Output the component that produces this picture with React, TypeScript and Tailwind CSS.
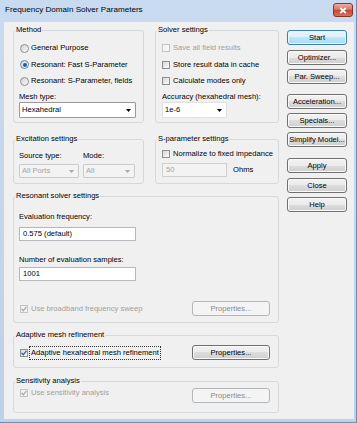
import React from "react";

const FONT = "font-['Liberation_Sans',Arial,sans-serif]";

function Arrow({ color = "#000" }: { color?: string }) {
  return (
    <svg width="5" height="3" viewBox="0 0 5 3" className="shrink-0">
      <path d="M0 0 H5 L2.5 3 Z" fill={color} />
    </svg>
  );
}

function Radio({ label, checked = false, h }: { label: string; checked?: boolean; h: string }) {
  return (
    <div className={`flex items-center ${h}`}>
      <span
        className={`ml-[1px] flex h-[9px] w-[9px] shrink-0 items-center justify-center rounded-full border ${
          checked ? "border-[#5a86b8]" : "border-[#8e8f8f]"
        } bg-[linear-gradient(135deg,#d2d2d2,#fbfbfb)]`}
      >
        {checked && <span className="h-[4px] w-[4px] rounded-full bg-[#1f5e9c]" />}
      </span>
      <span className="ml-[2px]">{label}</span>
    </div>
  );
}

function Check({ checked = false, disabled = false }: { checked?: boolean; disabled?: boolean }) {
  return (
    <span
      className={`flex h-[8px] w-[8px] shrink-0 items-center justify-center border ${
        disabled
          ? "border-[#c4c4c4] bg-[#f4f4f4]"
          : "border-[#8e8f8f] bg-[linear-gradient(135deg,#d6d6d6,#fbfbfb)]"
      }`}
    >
      {checked && (
        <svg width="6" height="6" viewBox="0 0 6 6">
          <path
            d="M0.6 3 L2.3 4.8 L5.4 0.8"
            fill="none"
            stroke={disabled ? "#a9a9a9" : "#3f55a5"}
            strokeWidth="1.3"
          />
        </svg>
      )}
    </span>
  );
}

function CheckRow({
  label,
  checked = false,
  disabled = false,
  h,
  ml = "ml-0",
}: {
  label: string;
  checked?: boolean;
  disabled?: boolean;
  h: string;
  ml?: string;
}) {
  return (
    <div className={`flex items-center ${h} ${ml}`}>
      <Check checked={checked} disabled={disabled} />
      <span className={`ml-[3px] ${disabled ? "text-[#a0a0a0]" : ""}`}>{label}</span>
    </div>
  );
}

function Combo({
  value,
  w,
  h,
  disabled = false,
  light = false,
}: {
  value: string;
  w: string;
  h: string;
  disabled?: boolean;
  light?: boolean;
}) {
  const box = disabled
    ? "border-[#cbcbcb] bg-[#f3f3f3] text-[#a3a3a3]"
    : light
    ? "border-[#e1e1e1] bg-white"
    : "border-[#9a9a9a] bg-white";
  return (
    <div className={`flex items-center justify-between rounded-[1px] border pl-[2px] pr-[4px] ${w} ${h} ${box}`}>
      <span>{value}</span>
      <Arrow color={disabled ? "#a8a8a8" : "#000"} />
    </div>
  );
}

function TextBox({ value, w, h, disabled = false }: { value: string; w: string; h: string; disabled?: boolean }) {
  return (
    <div
      className={`flex items-center border pl-[3px] ${w} ${h} ${
        disabled ? "border-[#d0d0d0] bg-[#f3f3f3] text-[#a3a3a3]" : "border-[#b5b7bd] bg-white"
      }`}
    >
      {value}
    </div>
  );
}

function Btn({
  label,
  mt = "mt-0",
  w = "w-[60px]",
  variant = "normal",
}: {
  label: string;
  mt?: string;
  w?: string;
  variant?: "normal" | "default" | "disabled";
}) {
  const style =
    variant === "default"
      ? "border-[#3c7fb1] bg-[linear-gradient(#eaf6fd,#d9f0fc_50%,#bee6fd_50%,#a7d9f5)] shadow-[inset_0_0_0_1px_#e6f5fd]"
      : variant === "disabled"
      ? "border-[#b3b7ba] bg-[#f4f4f4] text-[#8a8a8a]"
      : "border-[#707070] bg-[linear-gradient(#f2f2f2,#ebebeb_50%,#dddddd_50%,#cfcfcf)] shadow-[inset_0_0_0_1px_#fafafa]";
  return (
    <div className={`flex h-[15px] shrink-0 items-center justify-center rounded-[3px] border ${w} ${mt} ${style}`}>
      {label}
    </div>
  );
}

function Group({
  title,
  className,
  children,
}: {
  title: string;
  className: string;
  children: React.ReactNode;
}) {
  return (
    <fieldset className={`min-w-0 rounded-[3px] border border-[#d5d9dd] ${className}`}>
      <legend className="ml-[1px] h-[10px] px-[1px] leading-[10px]">{title}</legend>
      {children}
    </fieldset>
  );
}

export default function App() {
  return (
    <div
      className={`flex h-[423px] w-[357px] flex-col overflow-hidden border-b border-r border-[#4d9bc9] bg-[linear-gradient(#c9dbf0,#bcd1ea)] ${FONT} text-[7.6px] leading-none text-black`}
    >
      {/* title bar */}
      <div className="flex h-[22px] shrink-0 items-start justify-between pl-[5px] pr-[3px]">
        <span className="mt-[6px] text-[8.1px]">Frequency Domain Solver Parameters</span>
        <div className="mt-[3px] flex h-[14px] w-[20px] items-center justify-center rounded-[3px] border border-[#8b3326] bg-[linear-gradient(#eab0a4,#d66e5a_50%,#c5442e_50%,#d6735e)]">
          <svg width="8" height="7" viewBox="0 0 8 7">
            <path d="M1.2 1 L6.8 6 M6.8 1 L1.2 6" stroke="#ffffff" strokeWidth="1.7" />
          </svg>
        </div>
      </div>

      {/* client area */}
      <div className="mb-[3px] ml-[4px] mr-[2px] flex flex-1 bg-[#f0f0f0] pl-[9px] pr-[7px] pt-[3px]">
        {/* left column */}
        <div className="flex w-[266px] flex-col">
          <div className="flex gap-[11px]">
            <Group title="Method" className="h-[98px] w-[131px]">
              <div className="flex flex-col pl-[5px] pt-[5px]">
                <Radio label="General Purpose" h="h-[16px]" />
                <Radio label="Resonant: Fast S-Parameter" checked h="h-[17px]" />
                <Radio label="Resonant: S-Parameter, fields" h="h-[16px]" />
                <div className="flex h-[13px] items-center pt-[3px]">Mesh type:</div>
                <Combo value="Hexahedral" w="w-[117px]" h="h-[16px]" />
              </div>
            </Group>
            <Group title="Solver settings" className="h-[98px] w-[124px]">
              <div className="flex flex-col pl-[6px] pt-[5px]">
                <CheckRow label="Save all field results" disabled h="h-[16px]" />
                <CheckRow label="Store result data in cache" h="h-[17px]" />
                <CheckRow label="Calculate modes only" h="h-[16px]" />
                <div className="flex h-[13px] items-center pt-[3px]">Accuracy (hexahedral mesh):</div>
                <Combo value="1e-6" w="w-[65px]" h="h-[16px]" light />
              </div>
            </Group>
          </div>

          <div className="mt-[11px] flex gap-[11px]">
            <Group title="Excitation settings" className="h-[50px] w-[131px]">
              <div className="flex pl-[5px] pt-[6px]">
                <div className="flex flex-col">
                  <div className="flex h-[12px] items-center">Source type:</div>
                  <div className="mt-[2px]">
                    <Combo value="All Ports" w="w-[60px]" h="h-[14px]" disabled />
                  </div>
                </div>
                <div className="ml-[4px] flex flex-col">
                  <div className="flex h-[12px] items-center">Mode:</div>
                  <div className="mt-[2px]">
                    <Combo value="All" w="w-[52px]" h="h-[14px]" disabled />
                  </div>
                </div>
              </div>
            </Group>
            <Group title="S-parameter settings" className="h-[50px] w-[124px]">
              <div className="flex flex-col pl-[6px] pt-[3px]">
                <CheckRow label="Normalize to fixed impedance" h="h-[14px]" />
                <div className="mt-[2px] flex items-center">
                  <TextBox value="50" w="w-[65px]" h="h-[14px]" disabled />
                  <span className="ml-[6px]">Ohms</span>
                </div>
              </div>
            </Group>
          </div>

          <Group title="Resonant solver settings" className="mt-[7px] h-[132px] w-[266px]">
            <div className="flex flex-col pl-[5px] pr-[8px] pt-[10px]">
              <div className="flex h-[12px] items-center">Evaluation frequency:</div>
              <div className="mt-[4px]">
                <TextBox value="0.575 (default)" w="w-[117px]" h="h-[14px]" />
              </div>
              <div className="mt-[13px] flex h-[12px] items-center">Number of evaluation samples:</div>
              <div className="mt-[1px]">
                <TextBox value="1001" w="w-[117px]" h="h-[14px]" />
              </div>
              <div className="mt-[20px] flex h-[15px] items-center justify-between">
                <CheckRow label="Use broadband frequency sweep" checked disabled h="h-[15px]" ml="ml-[1px]" />
                <Btn label="Properties..." w="w-[78px]" variant="disabled" />
              </div>
            </div>
          </Group>

          <Group title="Adaptive mesh refinement" className="mt-[7px] h-[38px] w-[266px]">
            <div className="flex h-[15px] items-center justify-between pl-[5px] pr-[8px] mt-[5px]">
              <div className="ml-[1px] flex items-center">
                <Check checked />
                <span className="ml-[1px] flex h-[14px] items-center border border-dotted border-[#333] px-[1px]">
                  Adaptive hexahedral mesh refinement
                </span>
              </div>
              <Btn label="Properties..." w="w-[78px]" />
            </div>
          </Group>

          <Group title="Sensitivity analysis" className="mt-[8px] h-[37px] w-[266px]">
            <div className="flex items-start justify-between pl-[5px] pr-[8px]">
              <div className="mt-[1px]">
                <CheckRow label="Use sensitivity analysis" checked disabled h="h-[12px]" ml="ml-[1px]" />
              </div>
              <Btn label="Properties..." w="w-[78px]" variant="disabled" mt="mt-[2px]" />
            </div>
          </Group>
        </div>

        {/* right column buttons */}
        <div className="ml-[8px] flex w-[60px] flex-col pt-[5px]">
          <Btn label="Start" variant="default" />
          <Btn label="Optimizer..." mt="mt-[5px]" />
          <Btn label="Par. Sweep..." mt="mt-[4px]" />
          <Btn label="Acceleration..." mt="mt-[10px]" />
          <Btn label="Specials..." mt="mt-[4px]" />
          <Btn label="Simplify Model..." mt="mt-[4px]" />
          <Btn label="Apply" mt="mt-[11px]" />
          <Btn label="Close" mt="mt-[5px]" />
          <Btn label="Help" mt="mt-[4px]" />
        </div>
      </div>
    </div>
  );
}
